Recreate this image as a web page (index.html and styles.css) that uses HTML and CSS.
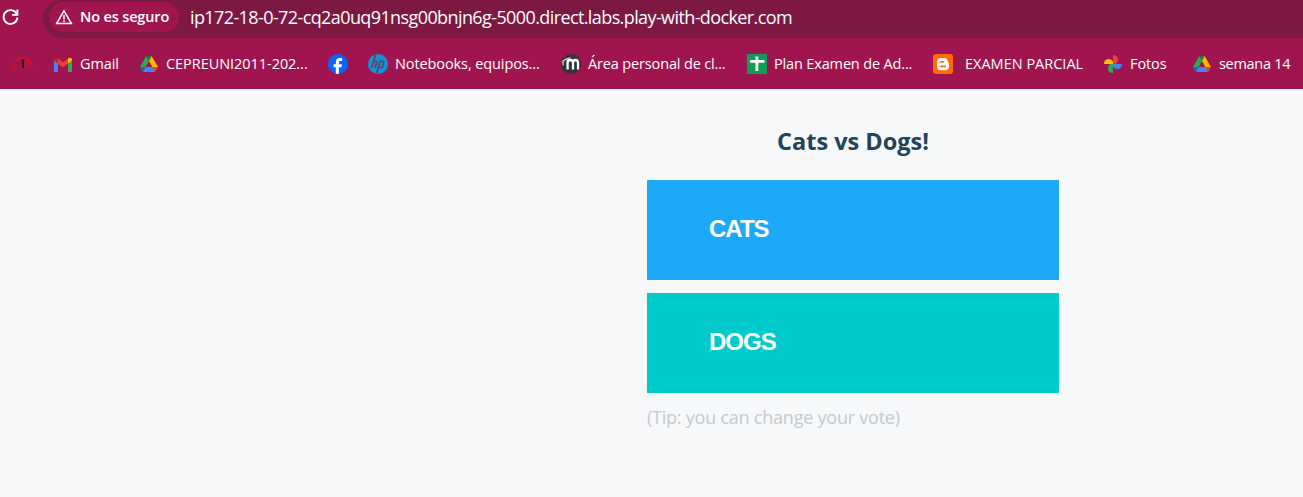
FILE: index.html
```html
<!DOCTYPE html>
<html lang="es">
<head>
<meta charset="utf-8">
<title>Cats vs Dogs!</title>
<link rel="stylesheet" href="styles.css">
</head>
<body>
<svg class="defs" aria-hidden="true">
  <symbol id="drive" viewBox="0 0 20 20">
    <path fill="#2da94f" d="M7.200 2 10 6.900 4 17.800 1 12.900z"/>
    <path fill="#188038" d="M7.200 2h5.400L10 6.900z"/>
    <path fill="#ffba00" d="M12.600 2 19 12.900h-5.600L10 6.900z"/>
    <path fill="#4285f4" d="M6.600 12.900h6.800L16 18H4z"/>
    <path fill="#1967d2" d="M1 12.900h5.600L4 18z"/>
    <path fill="#ea4335" d="M13.400 12.900H19L16 18z"/>
  </symbol>
</svg>
<header>
  <div class="toolbar">
    <svg class="reload" viewBox="0 0 16 16"><path d="M13.800 5.500A6.500 6.500 0 1 0 14.500 9M14.500 1.500v5h-5"/></svg>
    <div class="address">
      <div class="chip">
        <svg class="warning" viewBox="0 0 18 16"><path d="M9 1.800 16.400 14.600H1.600zM9 6v4.500M9 11.600v1.300"/></svg>
        <span class="chip-text">No es seguro</span>
      </div>
      <span class="url">ip172-18-0-72-cq2a0uq91nsg00bnjn6g-5000.direct.labs.play-with-docker.com</span>
    </div>
  </div>
  <nav class="bookmarks">
    <a class="bookmark"><svg class="icon" viewBox="0 0 20 20"><path fill="none" stroke="#e50c1c" stroke-width="1.200" d="M.8 13.500C.8 8 5 3.700 10 3.700S19 8 19.300 13.500M12 6C15.500 6.800 16.800 10 17 13.500M11.800 9C13.800 9.800 14.500 11.500 14.800 13.500M1 13.500l3-.8"/><path fill="#160b12" d="M9 5.500h2V14H9z"/></svg></a>
    <a class="bookmark"><svg class="icon" viewBox="0 0 20 20"><path fill="#4285f4" d="M1 6l4 3v9H2q-1 0-1-1z"/><path fill="#34a853" d="M15 9l4-3v11q0 1-1 1h-3z"/><path fill="#ea4335" d="M5 4.500l5 4 5-4V9.500l-5 4-5-4z"/><path fill="#c5221f" d="M1 6c0-2.400 2-3 4-1.500v5L1 6.500z"/><path fill="#fbbc04" d="M15 4.500c2-1.500 4-.9 4 1.500v.5l-4 3z"/></svg><span class="label gmail">Gmail</span></a>
    <a class="bookmark"><svg class="icon"><use href="#drive"/></svg><span class="label cepre">CEPREUNI2011-202...</span></a>
    <a class="bookmark"><svg class="icon" viewBox="0 0 20 20"><circle cx="10" cy="10" r="10" fill="#0866ff"/><path fill="#fff" d="M7.800 19.800v-6.500H5.600v-3h2.200V8.700c0-3.300 1.600-4.700 4.300-4.700.8 0 1.500.1 2 .2v2.700h-1.500c-1.300 0-1.700.6-1.700 1.800v1.600H14l-.5 3h-2.600v6.500q-1.600.3-3.100 0z"/></svg></a>
    <a class="bookmark"><svg class="icon" viewBox="0 0 20 20"><circle cx="10" cy="10" r="10" fill="#0d96d3"/><path fill="none" stroke="#7c345f" stroke-width="1.600" d="M7.400 1 3.600 14M5.200 7.300h2.600q1.200 0 .8 1.300L7.100 14M12.200 6.500 8.600 19.300M11.700 7.300h3q1.500 0 1.100 1.400l-1 3.500q-.4 1.300-1.700 1.300h-2.700"/></svg><span class="label hp">Notebooks, equipos...</span></a>
    <a class="bookmark"><svg class="icon" viewBox="0 0 20 20"><circle cx="10" cy="10" r="10" fill="#303437"/><path fill="none" stroke="#fff" stroke-width="2.300" d="M6.600 15.500V5.500M6.600 9q0-3 2.700-3T12 9v6.500M12 9q0-3 2.500-3T17 9v6.500"/><path fill="none" stroke="#e5e5e5" stroke-width="1.200" d="M1.500 7.500 4.500 5.200l5-1.500M2 7v4.500"/></svg><span class="label area">Área personal de cl...</span></a>
    <a class="bookmark"><svg class="icon" viewBox="0 0 20 20"><rect width="20" height="20" rx="1" fill="#0f9d58"/><path fill="#fff" d="M8.500 2.500h2.800V6H17.500v2.800h-6.200V17H8.500V8.800H3V6h5.500z"/></svg><span class="label plan">Plan Examen de Ad...</span></a>
    <a class="bookmark"><svg class="icon" viewBox="0 0 20 20"><rect width="20" height="20" rx="3" fill="#ff6b00"/><path fill="#fff" fill-rule="evenodd" d="M7.500 4h3.800c2.200 0 3.500 1.700 3.500 3.500 0 1 .4 1.300 1.200 1.500v3.500c0 2.300-1.500 3.700-3.700 3.700H7.500C5.300 16.200 4 14.700 4 12.500V7.700C4 5.500 5.300 4 7.500 4zM7.700 7c-1.200 0-1.200 1.700 0 1.700h2.800c1.200 0 1.200-1.700 0-1.700zM7.700 11.400c-1.200 0-1.200 1.800 0 1.800h4.700c1.200 0 1.200-1.800 0-1.800z"/></svg><span class="label examen">EXAMEN PARCIAL</span></a>
    <a class="bookmark"><svg class="icon" viewBox="0 0 20 20"><path fill="#ea4335" d="M10 1c6 0 6.500 7 2.500 9H10z"/><path fill="#4285f4" d="M19 10c0 6-7 6.500-9 2.500V10z"/><path fill="#34a853" d="M10 19c-6 0-6.500-7-2.500-9H10z"/><path fill="#fbbc04" d="M1 10c0-6 7-6.500 9-2.500V10z"/></svg><span class="label fotos">Fotos</span></a>
    <a class="bookmark"><svg class="icon"><use href="#drive"/></svg><span class="label semana">semana 14</span></a>
  </nav>
</header>
<main>
  <h1>Cats vs Dogs!</h1>
  <button class="vote cats">CATS</button>
  <button class="vote dogs">DOGS</button>
  <p class="tip">(Tip: you can change your vote)</p>
</main>
</body>
</html>
```

FILE: styles.css
```css
* { box-sizing: border-box; }
body { margin: 0; height: 497px; overflow: hidden; background: #f7f8f9; font-family: "Open Sans", sans-serif; }
.defs { display: none; }
header { height: 89px; background: #a0144f; color: #fff; white-space: nowrap; }
.toolbar { display: flex; align-items: flex-start; height: 38px; }
.reload { width: 17px; height: 17px; margin: 8px 24px 0 2px; fill: none; stroke: #fff; stroke-width: 1.8; }
.address { flex: 1; display: flex; align-items: center; height: 38px; padding: 0 0 4px 6px; background: #7d1842; border-radius: 19px 0 0 19px; }
.chip { display: flex; align-items: center; width: 130px; height: 30px; padding-left: 6px; border-radius: 15px; background: #a0144f; }
.warning { width: 18px; height: 16px; margin-right: 7px; fill: none; stroke: #fff; stroke-width: 1.5; }
.chip-text { margin-top: -1px; font-size: 14.5px; font-weight: 600; letter-spacing: -.15px; }
.url { margin-left: 11px; font-size: 18px; letter-spacing: -.6px; }
.bookmarks { display: flex; align-items: center; gap: 20px; height: 51px; padding-left: 13px; }
.bookmark { display: flex; align-items: center; gap: 7px; flex: none; }
.icon { display: block; width: 20px; height: 20px; }
.label { font-size: 14.5px; line-height: 20px; letter-spacing: -.1px; }
.gmail { width: 39px; }
.cepre { width: 142px; letter-spacing: -.05px; }
.hp { width: 146px; }
.area { width: 139px; letter-spacing: -.15px; }
.plan { width: 139px; letter-spacing: -.15px; }
.examen { width: 123px; padding-left: 5px; letter-spacing: 0; }
.fotos { width: 42px; }
.semana { width: 73px; letter-spacing: -.3px; }
main { width: 412px; margin-left: 647px; padding-top: 35px; }
h1 { margin: 0 0 21px; font-size: 23.5px; line-height: 35px; font-weight: 700; text-align: center; color: #244358; }
.vote { display: block; width: 412px; height: 100px; margin: 0 0 13px; padding: 0 0 2px 62px; border: 0; color: #fff; text-align: left; font: bold 24px "Liberation Sans", Arial, sans-serif; letter-spacing: -1px; }
.cats { background: #1caaf8; }
.dogs { background: #00cbca; }
.tip { margin: -1px 0 0; font-size: 18px; line-height: 24px; letter-spacing: -.23px; color: #c3cad0; }
```
